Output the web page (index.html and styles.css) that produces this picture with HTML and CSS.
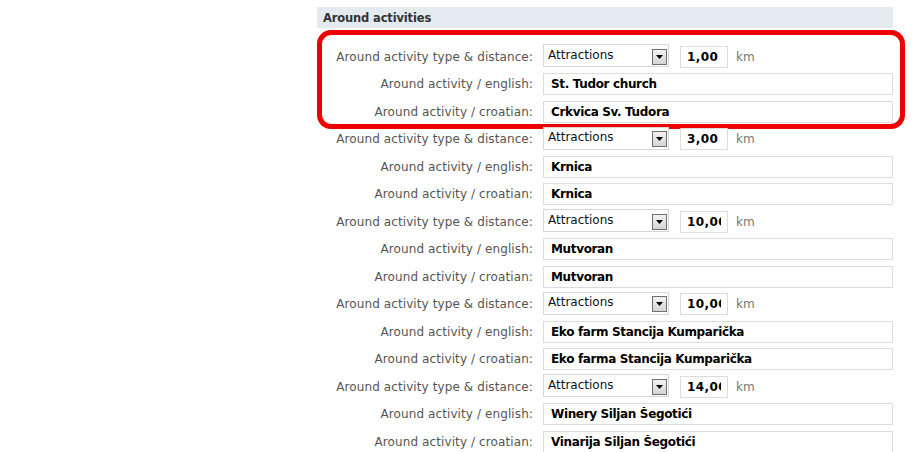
FILE: index.html
```html
<!DOCTYPE html>
<html>
<head>
<meta charset="utf-8">
<link rel="stylesheet" href="styles.css">
</head>
<body>
<div class="page">
  <div class="section">
    <div class="section-head">Around activities</div>
    <div class="rows">
      <div class="group highlighted">
        <div class="row"><label class="lbl">Around activity type &amp; distance:</label><div class="ctrl"><div class="select"><span class="sel-text">Attractions</span><span class="sel-btn"><svg width="7" height="4" viewBox="0 0 7 4"><path d="M0 0h7L3.5 4z" fill="#000"/></svg></span></div><input class="num" type="text" value="1,00"><span class="unit">km</span></div></div>
        <div class="row"><label class="lbl">Around activity / english:</label><div class="ctrl"><input class="txt" type="text" value="St. Tudor church"></div></div>
        <div class="row"><label class="lbl">Around activity / croatian:</label><div class="ctrl"><input class="txt" type="text" value="Crkvica Sv. Tudora"></div></div>
        <div class="highlight"></div>
      </div>
      <div class="group">
        <div class="row"><label class="lbl">Around activity type &amp; distance:</label><div class="ctrl"><div class="select"><span class="sel-text">Attractions</span><span class="sel-btn"><svg width="7" height="4" viewBox="0 0 7 4"><path d="M0 0h7L3.5 4z" fill="#000"/></svg></span></div><input class="num" type="text" value="3,00"><span class="unit">km</span></div></div>
        <div class="row"><label class="lbl">Around activity / english:</label><div class="ctrl"><input class="txt" type="text" value="Krnica"></div></div>
        <div class="row"><label class="lbl">Around activity / croatian:</label><div class="ctrl"><input class="txt" type="text" value="Krnica"></div></div>
      </div>
      <div class="group">
        <div class="row"><label class="lbl">Around activity type &amp; distance:</label><div class="ctrl"><div class="select"><span class="sel-text">Attractions</span><span class="sel-btn"><svg width="7" height="4" viewBox="0 0 7 4"><path d="M0 0h7L3.5 4z" fill="#000"/></svg></span></div><input class="num" type="text" value="10,00"><span class="unit">km</span></div></div>
        <div class="row"><label class="lbl">Around activity / english:</label><div class="ctrl"><input class="txt" type="text" value="Mutvoran"></div></div>
        <div class="row"><label class="lbl">Around activity / croatian:</label><div class="ctrl"><input class="txt" type="text" value="Mutvoran"></div></div>
      </div>
      <div class="group">
        <div class="row"><label class="lbl">Around activity type &amp; distance:</label><div class="ctrl"><div class="select"><span class="sel-text">Attractions</span><span class="sel-btn"><svg width="7" height="4" viewBox="0 0 7 4"><path d="M0 0h7L3.5 4z" fill="#000"/></svg></span></div><input class="num" type="text" value="10,00"><span class="unit">km</span></div></div>
        <div class="row"><label class="lbl">Around activity / english:</label><div class="ctrl"><input class="txt" type="text" value="Eko farm Stancija Kumparička"></div></div>
        <div class="row"><label class="lbl">Around activity / croatian:</label><div class="ctrl"><input class="txt" type="text" value="Eko farma Stancija Kumparička"></div></div>
      </div>
      <div class="group">
        <div class="row"><label class="lbl">Around activity type &amp; distance:</label><div class="ctrl"><div class="select"><span class="sel-text">Attractions</span><span class="sel-btn"><svg width="7" height="4" viewBox="0 0 7 4"><path d="M0 0h7L3.5 4z" fill="#000"/></svg></span></div><input class="num" type="text" value="14,00"><span class="unit">km</span></div></div>
        <div class="row"><label class="lbl">Around activity / english:</label><div class="ctrl"><input class="txt" type="text" value="Winery Siljan Šegotići"></div></div>
        <div class="row"><label class="lbl">Around activity / croatian:</label><div class="ctrl"><input class="txt" type="text" value="Vinarija Siljan Šegotići"></div></div>
      </div>
    </div>
  </div>
</div>
</body>
</html>
```
FILE: styles.css
```css
html, body {
  margin: 0;
  padding: 0;
  background: #fff;
}
body {
  font-family: "DejaVu Sans", Verdana, sans-serif;
  font-size: 12px;
  overflow: hidden;
  height: 452px;
}
.page {
  padding: 7px 0 0 317px;
}
.section {
  width: 576px;
}
.section-head {
  background: #e3eaf0;
  height: 21px;
  line-height: 22px;
  padding-left: 6px;
  font-weight: bold;
  font-size: 11.5px;
  letter-spacing: -0.15px;
  color: #333;
}
.rows {
  padding-top: 15px;
}
.group {
  position: relative;
}
.row {
  display: flex;
  align-items: center;
  height: 27.5px;
}
.lbl {
  width: 216px;
  text-align: right;
  color: #555;
  font-size: 12px;
  letter-spacing: 0.1px;
  flex: none;
}
.ctrl {
  margin-left: 10px;
  display: flex;
  align-items: center;
  flex: 1;
}
.select {
  width: 126px;
  height: 23px;
  box-sizing: border-box;
  border: 1px solid #d6d6d6;
  background: #fff;
  display: flex;
  align-items: center;
  justify-content: space-between;
  padding: 0 1px 0 4px;
  margin-top: -2px;
}
.sel-text {
  color: #111;
  font-size: 12px;
  margin-top: -2px;
}
.sel-btn {
  width: 15px;
  height: 16px;
  box-sizing: border-box;
  border: 1px solid #6f6f6f;
  background: linear-gradient(#f2f2f2, #d4d4d4);
  display: flex;
  align-items: center;
  justify-content: center;
  margin-top: 2px;
}
.num, .txt {
  font-family: "DejaVu Sans", Verdana, sans-serif;
  font-size: 12px;
  font-weight: bold;
  color: #000;
  border: 1px solid #dcdcdc;
  background: #fff;
  height: 22px;
  box-sizing: border-box;
  margin: 0;
  outline: none;
}
.num {
  width: 48px;
  margin-left: 11px;
  padding: 0 6px 0 6px;
  letter-spacing: 0.4px;
}
.txt {
  width: 350px;
  padding: 0 0 0 7px;
  letter-spacing: -0.35px;
}
.unit {
  color: #777;
  margin-left: 8px;
  font-size: 12px;
}
.highlight {
  position: absolute;
  left: 0;
  right: -12px;
  top: -13px;
  bottom: -3px;
  border: 5px solid #ee0000;
  border-radius: 14px;
  pointer-events: none;
}
```
